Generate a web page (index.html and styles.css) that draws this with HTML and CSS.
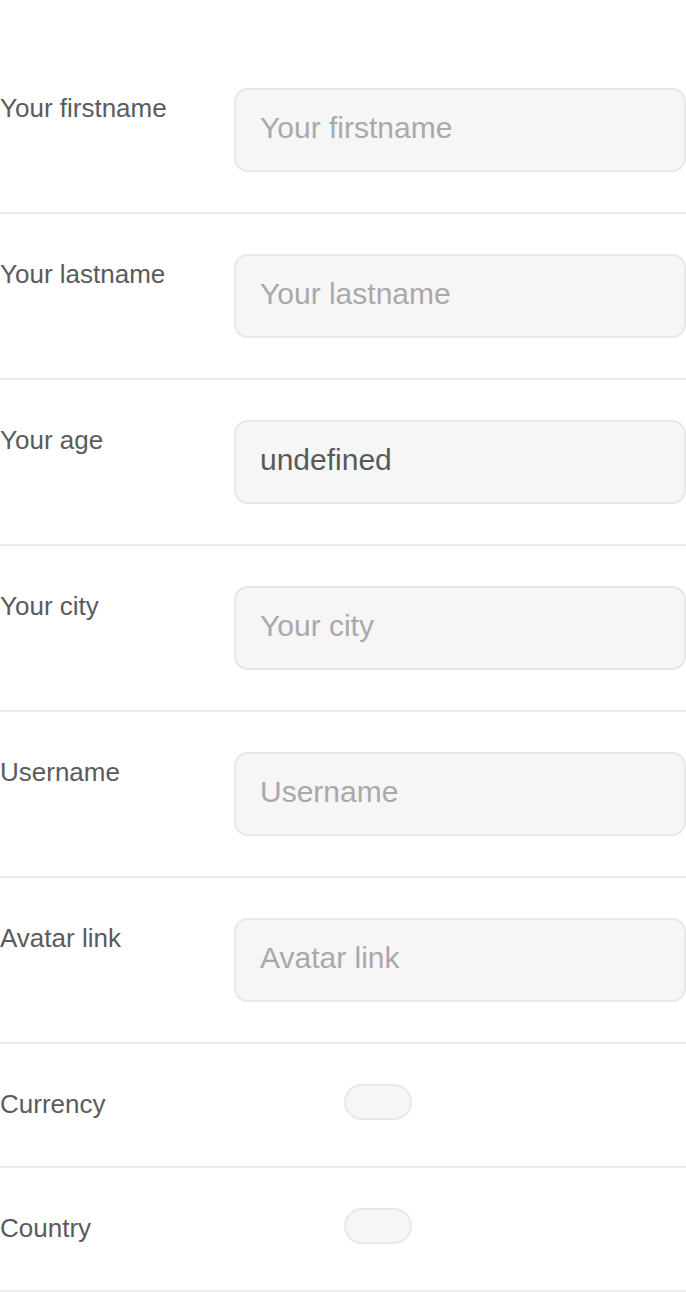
FILE: index.html
```html
<!DOCTYPE html>
<html lang="en">
<head>
<meta charset="utf-8">
<title>Profile form</title>
<link rel="stylesheet" href="styles.css">
</head>
<body>
<form class="form">
  <div class="row">
    <label class="label" for="firstname">Your firstname</label>
    <input class="field" id="firstname" type="text" placeholder="Your firstname">
  </div>
  <div class="row">
    <label class="label" for="lastname">Your lastname</label>
    <input class="field" id="lastname" type="text" placeholder="Your lastname">
  </div>
  <div class="row">
    <label class="label" for="age">Your age</label>
    <input class="field" id="age" type="text" value="undefined">
  </div>
  <div class="row">
    <label class="label" for="city">Your city</label>
    <input class="field" id="city" type="text" placeholder="Your city">
  </div>
  <div class="row">
    <label class="label" for="username">Username</label>
    <input class="field" id="username" type="text" placeholder="Username">
  </div>
  <div class="row">
    <label class="label" for="avatar">Avatar link</label>
    <input class="field" id="avatar" type="text" placeholder="Avatar link">
  </div>
  <div class="row row-select">
    <label class="label" for="currency">Currency</label>
    <select class="picker" id="currency"></select>
  </div>
  <div class="row row-select">
    <label class="label" for="country">Country</label>
    <select class="picker" id="country"></select>
  </div>
</form>
</body>
</html>
```
FILE: styles.css
```css
html, body {
  margin: 0;
  padding: 0;
  background: #ffffff;
}

body {
  font-family: "Liberation Sans", Arial, sans-serif;
  color: #58595b;
}

.form {
  display: flex;
  flex-direction: column;
  padding-top: 48px;
  width: 686px;
}

.row {
  display: grid;
  grid-template-columns: 234px 1fr;
  align-items: start;
  padding: 40px 0 40px 0;
  border-bottom: 2px solid #ebebeb;
}

.label {
  font-size: 26px;
  line-height: 40px;
  color: #5a5b5d;
}

.field {
  box-sizing: border-box;
  width: 100%;
  height: 84px;
  margin: 0;
  padding: 0 0 5px 24px;
  border: 2px solid #e8e8e8;
  border-radius: 14px;
  background: #f6f6f6;
  font-family: "Liberation Sans", Arial, sans-serif;
  font-size: 30px;
  color: #58595b;
  outline: none;
}

.field::placeholder {
  color: #a9a9a9;
  opacity: 1;
}

.row-select {
  padding-bottom: 42px;
}

.picker {
  -webkit-appearance: none;
  appearance: none;
  box-sizing: border-box;
  width: 68px;
  height: 36px;
  margin: 0 0 0 110px;
  padding: 0;
  border: 2px solid #e8e8e8;
  border-radius: 18px;
  background: #f6f6f6;
  outline: none;
}
```
